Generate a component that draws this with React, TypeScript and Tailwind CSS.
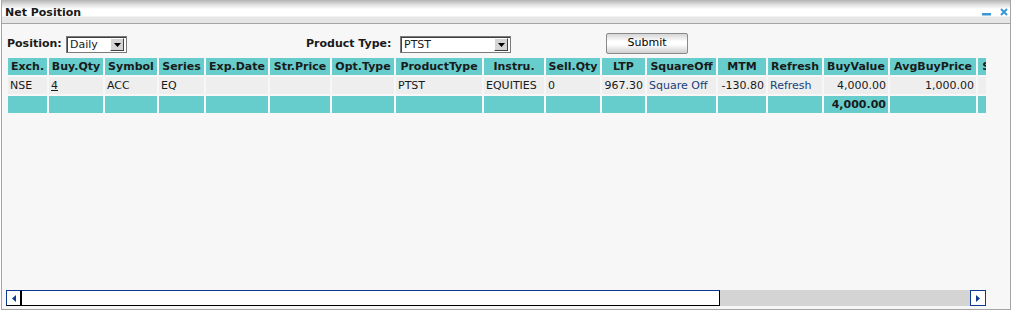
import React from "react";

type Col = { h: string; w: string; v: string; t?: string; align?: string; link?: boolean; u?: boolean };

const COLS: Col[] = [
  { h: "Exch.", w: "w-[39px] min-w-[39px]", v: "NSE" },
  { h: "Buy.Qty", w: "w-[54px] min-w-[54px]", v: "4", u: true },
  { h: "Symbol", w: "w-[52px] min-w-[52px]", v: "ACC" },
  { h: "Series", w: "w-[45px] min-w-[45px]", v: "EQ" },
  { h: "Exp.Date", w: "w-[62px] min-w-[62px]", v: "" },
  { h: "Str.Price", w: "w-[60px] min-w-[60px]", v: "" },
  { h: "Opt.Type", w: "w-[62px] min-w-[62px]", v: "" },
  { h: "ProductType", w: "w-[86px] min-w-[86px]", v: "PTST" },
  { h: "Instru.", w: "w-[60px] min-w-[60px]", v: "EQUITIES" },
  { h: "Sell.Qty", w: "w-[54px] min-w-[54px]", v: "0" },
  { h: "LTP", w: "w-[43px] min-w-[43px]", v: "967.30", align: "text-right" },
  { h: "SquareOff", w: "w-[69px] min-w-[69px]", v: "Square Off", link: true },
  { h: "MTM", w: "w-[48px] min-w-[48px]", v: "-130.80", align: "text-right" },
  { h: "Refresh", w: "w-[54px] min-w-[54px]", v: "Refresh", link: true },
  { h: "BuyValue", w: "w-[64px] min-w-[64px]", v: "4,000.00", t: "4,000.00", align: "text-right" },
  { h: "AvgBuyPrice", w: "w-[86px] min-w-[86px]", v: "1,000.00", align: "text-right" },
  { h: "SellValue", w: "w-[66px] min-w-[66px]", v: "", align: "text-right" },
];

function Select({ value, w }: { value: string; w: string }) {
  return (
    <div className={`${w} h-[17px] flex items-center bg-white border border-[#7b7b7b] shadow-[inset_1px_1px_0_#404040]`}>
      <span className="flex-1 pl-[3px] leading-[15px]">{value}</span>
      <div className="w-[14px] h-[13px] mr-[2px] flex items-center justify-center bg-[#d4d4d4] border border-t-white border-l-white border-r-[#404040] border-b-[#404040]">
        <svg width="7" height="4" viewBox="0 0 7 4">
          <path d="M0 0h7L3.5 4z" fill="#000" />
        </svg>
      </div>
    </div>
  );
}

export default function App() {
  return (
    <div className="w-[1013px] h-[310px] bg-white font-['DejaVu_Sans',Verdana,sans-serif] text-[11px] text-[#1a1a1a]">
      <div className="ml-[1px] w-[1010px]">
        {/* Title bar */}
        <div className="h-[24px] flex items-center justify-between pt-[3px] border-x border-b border-[#a5a5a5] bg-[linear-gradient(to_bottom,#b4b4b4_0px,#e2e2e2_5px,#f6f6f6_8px,#ffffff_9px,#ffffff_16px,#e6e6e6_17px,#e6e6e6_23px)]">
          <span className="pl-[3px] font-bold text-[11px]">Net Position</span>
          <div className="flex items-center gap-[9px] pr-[2px]">
            <svg width="9" height="3" viewBox="0 0 9 3" className="mt-[3px]">
              <rect width="9" height="2.5" fill="#3a97d4" />
            </svg>
            <svg width="8" height="8" viewBox="0 0 8 8" className="mb-[3px]">
              <path d="M1 1l6 6M7 1L1 7" stroke="#3a97d4" strokeWidth="2" />
            </svg>
          </div>
        </div>

        {/* Body */}
        <div className="h-[286px] border-x border-b border-[#a5a5a5] bg-[#f7f7f7]">
          {/* Controls */}
          <div className="flex items-start pt-[9px] pl-[5px] h-[31px]">
            <div className="w-[299px] flex items-center mt-[3px]">
              <span className="w-[59px] font-bold">Position:</span>
              <Select value="Daily" w="w-[61px]" />
            </div>
            <div className="w-[300px] flex items-center mt-[3px]">
              <span className="w-[94px] font-bold">Product Type:</span>
              <Select value="PTST" w="w-[111px]" />
            </div>
            <button className="w-[82px] h-[21px] border border-[#8a8a8a] rounded-[2px] bg-[linear-gradient(to_bottom,#d6d6d6,#ffffff_40%,#ffffff_55%,#cfcfcf)] text-[11px] text-black">
              Submit
            </button>
          </div>

          {/* Grid with horizontal scrollbar */}
          <div className="ml-[4px] mt-[1px] w-[980px] h-[250px] flex flex-col">
            <div className="flex-1 overflow-hidden">
              <table className="border-separate border-spacing-[2px] whitespace-nowrap">
                <thead>
                  <tr>
                    {COLS.map((c) => (
                      <th key={c.h} className={`${c.w} h-[17px] px-[2px] p-0 bg-[#66cccc] font-bold text-center overflow-hidden leading-[17px]`}>
                        {c.h}
                      </th>
                    ))}
                  </tr>
                </thead>
                <tbody>
                  <tr>
                    {COLS.map((c) => (
                      <td key={c.h} className={`${c.w} h-[17px] px-[2px] p-0 bg-[#eeeeee] overflow-hidden leading-[17px] ${c.align ?? "text-left"} ${c.link ? "text-[#163e7a]" : ""}`}>
                        {c.u ? <span className="underline">{c.v}</span> : c.v}
                      </td>
                    ))}
                  </tr>
                  <tr>
                    {COLS.map((c) => (
                      <td key={c.h} className={`${c.w} h-[17px] px-[2px] p-0 bg-[#66cccc] font-bold text-right overflow-hidden leading-[17px]`}>
                        {c.t ?? ""}
                      </td>
                    ))}
                  </tr>
                </tbody>
              </table>
            </div>

            {/* Scrollbar */}
            <div className="h-[16px] flex">
              <div className="w-[16px] flex items-center justify-center bg-white border-t border-l border-[#0d3a8e] border-b border-b-black border-r-2 border-r-black">
                <svg width="4" height="7" viewBox="0 0 4 7">
                  <path d="M4 0v7L0 3.5z" fill="#0d3a8e" />
                </svg>
              </div>
              <div className="w-[698px] bg-white border-t border-[#0d3a8e] border-b border-b-black border-r border-r-black" />
              <div className="w-[250px] bg-[#d4d4d4]" />
              <div className="w-[16px] flex items-center justify-center bg-white border border-[#0d3a8e]">
                <svg width="4" height="7" viewBox="0 0 4 7">
                  <path d="M0 0v7L4 3.5z" fill="#0d3a8e" />
                </svg>
              </div>
            </div>
          </div>
        </div>
      </div>
    </div>
  );
}
